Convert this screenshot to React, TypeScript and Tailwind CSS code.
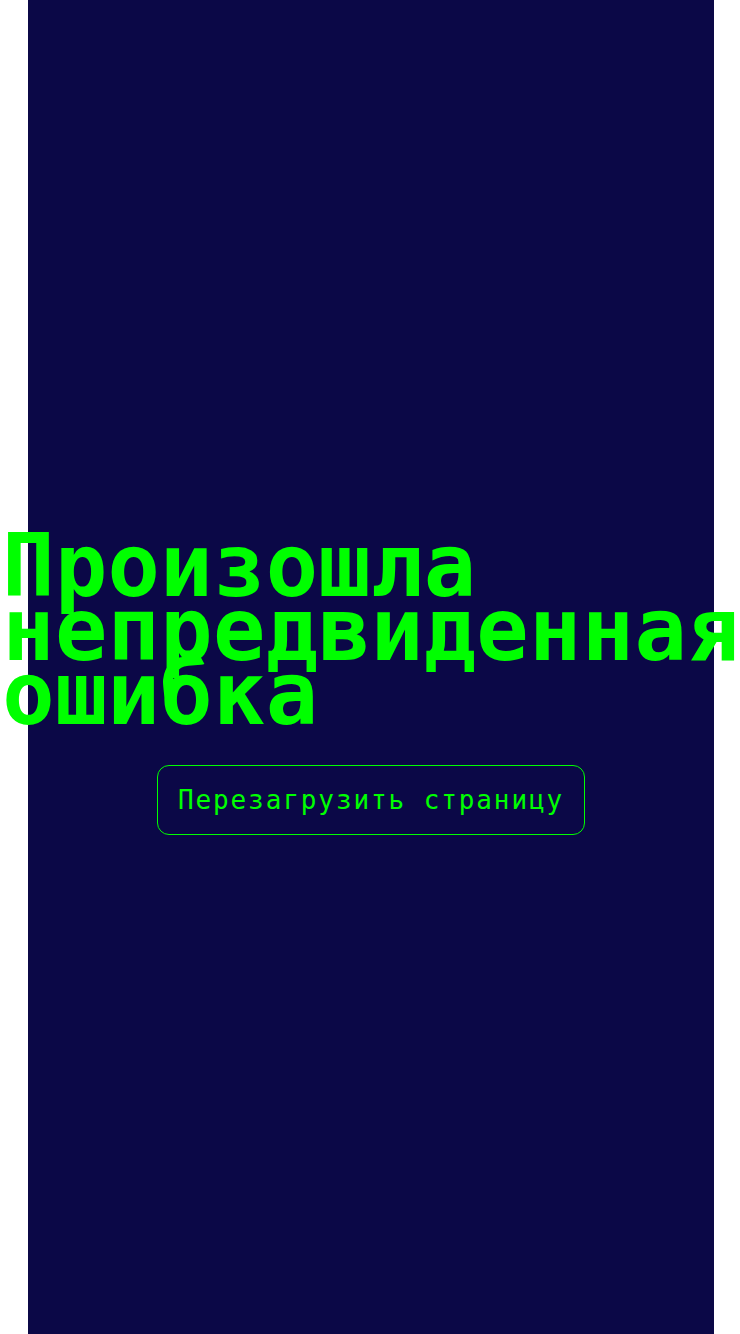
import React from "react";

export default function App() {
  return (
    <div className="min-h-screen bg-white">
      <div className="ml-[28px] w-[686px] min-h-[1334px] bg-[#0b0847] flex flex-col items-center justify-center pt-[35px]">
        <h1 className="text-[87px] leading-[64px] font-bold tracking-[0.3px] text-[#00ff00] [font-family:'DejaVu_Sans_Mono',monospace]">
          Произошла непредвиденная ошибка
        </h1>
        <button className="mt-[39px] w-[428px] h-[70px] border border-[#00ff00] rounded-[12px] text-[#00ff00] text-[26px] tracking-[1.9px] [font-family:'DejaVu_Sans_Mono',monospace]">
          Перезагрузить страницу
        </button>
      </div>
    </div>
  );
}
